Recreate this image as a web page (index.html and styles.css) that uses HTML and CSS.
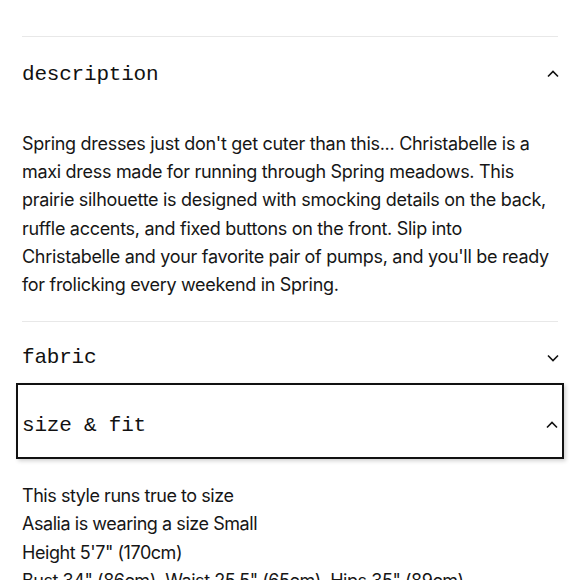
FILE: index.html
```html
<!DOCTYPE html>
<html lang="en">
<head>
<meta charset="utf-8">
<link rel="stylesheet" href="styles.css">
</head>
<body>
<div class="accordion">
  <section class="item">
    <button class="head head-desc" type="button">
      <span class="title">description</span>
      <svg class="chev" width="12" height="8" viewBox="0 0 12 8"><path d="M1 6.5 L6 1.5 L11 6.5" fill="none" stroke="#111" stroke-width="1.6"/></svg>
    </button>
    <p class="desc">Spring dresses just don't get cuter than this... Christabelle is a maxi dress made for running through Spring meadows. This prairie silhouette is designed with smocking details on the back, ruffle accents, and fixed buttons on the front. Slip into Christabelle and your favorite pair of pumps, and you'll be ready for frolicking every weekend in Spring.</p>
  </section>
  <section class="item">
    <button class="head head-fabric" type="button">
      <span class="title">fabric</span>
      <svg class="chev" width="12" height="8" viewBox="0 0 12 8"><path d="M1 1.5 L6 6.5 L11 1.5" fill="none" stroke="#111" stroke-width="1.6"/></svg>
    </button>
    <button class="head head-size focused" type="button">
      <span class="title">size &amp; fit</span>
      <svg class="chev" width="12" height="8" viewBox="0 0 12 8"><path d="M1 6.5 L6 1.5 L11 6.5" fill="none" stroke="#111" stroke-width="1.6"/></svg>
    </button>
    <div class="fit">
      <p>This style runs true to size</p>
      <p>Asalia is wearing a size Small</p>
      <p>Height 5'7" (170cm)</p>
      <p>Bust 34" (86cm), Waist 25.5" (65cm), Hips 35" (89cm)</p>
    </div>
  </section>
</div>
</body>
</html>
```

FILE: styles.css
```css
* { box-sizing: border-box; }
html, body { margin: 0; padding: 0; background: #fff; }
body {
  font-family: Inter, "Noto Sans", sans-serif;
  color: #161616;
  overflow: hidden;
}
.accordion {
  padding: 36px 22px 0;
}
.item {
  border-top: 1px solid #e8e8e8;
}
.head {
  display: flex;
  align-items: center;
  justify-content: space-between;
  width: 100%;
  background: none;
  border: none;
  padding: 0;
  margin: 0;
  color: #111;
  cursor: pointer;
}
.title {
  font-family: "Liberation Mono", "DejaVu Sans Mono", monospace;
  font-size: 21px;
  letter-spacing: -0.2px;
}
.chev { display: block; margin-right: -1px; }
.head-desc { height: 72px; padding-top: 2px; }
.head-fabric { height: 62px; padding-top: 9px; }
.head-size {
  width: calc(100% + 12px);
  margin: -1px -6px 0;
  height: 76px;
  padding: 8px 5px 0 4px;
  border: 2px solid #111;
  box-shadow: 2px 2px 4px rgba(0,0,0,0.18);
}
.desc {
  margin: 21px 0 0;
  padding-bottom: 22px;
  font-size: 18px;
  line-height: 28.2px;
  letter-spacing: -0.3px;
}
.fit {
  padding-top: 23px;
  font-size: 18px;
  line-height: 28.2px;
  letter-spacing: -0.45px;
}
.fit p { margin: 0; white-space: nowrap; }
```
